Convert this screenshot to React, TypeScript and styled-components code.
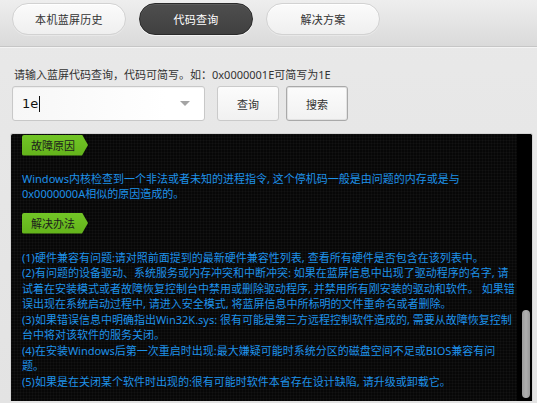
import { useLayoutEffect, useRef, useState } from 'react';
import styled, { createGlobalStyle } from 'styled-components';

const FONT = '"Noto Sans", "Noto Sans CJK SC", sans-serif';
const TEXT_BLUE = '#1e92ea';

const GlobalStyle = createGlobalStyle`
  html, body {
    margin: 0;
    padding: 0;
    height: 100%;
    overflow: hidden;
  }
  body {
    background: linear-gradient(#e9e9e9, #e3e3e3);
    font-family: ${FONT};
  }
  #root {
    height: 100%;
  }
`;

const Page = styled.div`
  display: flex;
  flex-direction: column;
  height: 100%;
`;

const TabBar = styled.div`
  display: flex;
  gap: 13px;
  height: 47px;
  padding: 3px 0 0 12px;
  box-sizing: border-box;
  background: linear-gradient(#eeeeee, #dadada);
  border-bottom: 1px solid #c6c6c6;
  box-shadow: 0 1px 0 #f4f4f4;
`;

const Tab = styled.div<{ $active?: boolean }>`
  width: 114px;
  height: 32px;
  box-sizing: border-box;
  border-radius: 16px;
  display: flex;
  align-items: center;
  justify-content: center;
  font-size: 11px;
  letter-spacing: 0.3px;
  color: ${(p) => (p.$active ? '#ffffff' : '#333333')};
  background: ${(p) =>
    p.$active ? 'linear-gradient(#4e4e4e, #404040)' : 'linear-gradient(#fbfbfb, #efefef)'};
  border: 1px solid ${(p) => (p.$active ? '#2a2a2a' : '#d2d2d2')};
  box-shadow: ${(p) =>
    p.$active ? 'inset 0 1px 0 #5c5c5c, 0 1px 0 #f2f2f2' : 'inset 0 1px 0 #ffffff, 0 1px 0 #e8e8e8'};
`;

const Body = styled.div`
  flex: 1;
  min-height: 0;
  display: flex;
  flex-direction: column;
  padding: 20px 4px 2px 10px;
`;

const Hint = styled.div`
  font-size: 11px;
  line-height: 15px;
  color: #333;
  padding-left: 4px;
`;

const SearchRow = styled.div`
  display: flex;
  gap: 7px;
  margin-top: 4px;
  padding-left: 2px;
`;

const Field = styled.div`
  width: 193px;
  height: 35px;
  box-sizing: border-box;
  display: flex;
  align-items: center;
  padding: 0 14px 0 9px;
  margin-right: 5px;
  border: 1px solid #c8c8c8;
  border-radius: 3px;
  background: linear-gradient(90deg, #f7f7f7, #ffffff 80%);
  box-shadow: inset 0 1px 1px rgba(0, 0, 0, 0.05);
`;

const FieldText = styled.span`
  font-family: "DejaVu Sans", sans-serif;
  font-size: 13px;
  color: #111;
`;

const Caret = styled.span`
  display: inline-block;
  width: 1px;
  height: 16px;
  margin-left: 1px;
  background: #111;
`;

const Spacer = styled.span`
  flex: 1;
`;

const Arrow = styled.span`
  width: 0;
  height: 0;
  border-left: 5px solid transparent;
  border-right: 5px solid transparent;
  border-top: 5px solid #a4a4a4;
`;

const Button = styled.button<{ $focused?: boolean }>`
  width: 62px;
  height: 35px;
  padding: 0;
  font-family: ${FONT};
  font-size: 11px;
  color: #333;
  border-radius: 3px;
  border: 1px solid ${(p) => (p.$focused ? '#a9a9a9' : '#cacaca')};
  background: linear-gradient(#fcfcfc, #f1f1f1);
  box-shadow: ${(p) => (p.$focused ? 'inset 0 0 0 1px #e2e2e2' : 'none')};
`;

const Panel = styled.div`
  flex: 1;
  min-height: 0;
  margin-top: 12px;
  display: flex;
  border-radius: 3px 3px 0 0;
  border: 1px solid #d4d4d4;
  border-bottom: none;
  background-color: #070707;
  background-image: linear-gradient(rgba(255, 255, 255, 0.025) 1px, transparent 1px),
    linear-gradient(90deg, rgba(255, 255, 255, 0.025) 1px, transparent 1px);
  background-size: 3px 3px;
  overflow: hidden;
`;

const Scroller = styled.div`
  flex: 1;
  overflow-y: scroll;
  scrollbar-width: none;
  padding: 0 2px 12px 11px;

  &::-webkit-scrollbar {
    display: none;
  }
`;

const Track = styled.div`
  width: 15px;
  box-sizing: border-box;
  padding: 3px 2px 3px 5px;
  background: #000;
  display: flex;
  flex-direction: column;
`;

const Thumb = styled.div`
  width: 8px;
  border-radius: 4px;
  background: linear-gradient(90deg, #9c9c9c, #b0b0b0 50%, #9a9a9a);
`;

const Tag = styled.div`
  width: 66px;
  height: 21px;
  box-sizing: border-box;
  padding-left: 9px;
  display: flex;
  align-items: center;
  font-size: 11px;
  color: #1c1c1c;
  background: linear-gradient(#72c526, #63b31b);
  border-radius: 2px;
  clip-path: polygon(0 0, calc(100% - 6px) 0, 100% 50%, calc(100% - 6px) 100%, 0 100%);
`;

const Section = styled.section<{ $gap?: number }>`
  display: flex;
  flex-direction: column;
  gap: ${(p) => p.$gap ?? 15}px;
  margin-top: 11px;

  &:first-child {
    margin-top: 8px;
  }
`;

const Text = styled.div`
  font-size: 11px;
  line-height: 15.5px;
  color: ${TEXT_BLUE};
  width: 494px;
`;

const sections = [
  { title: '蓝屏代码', lines: ['0x0000001E'] },
  { title: '错误名称', lines: ['KMODE_EXCEPTION_NOT_HANDLED'] },
  {
    title: '错误说明',
    lines: [
      '内核模式下的程序产生了一个异常, 而错误处理程序并没有捕获到该异常。',
      '蓝屏信息中通常会给出发生异常的地址以及相关的驱动程序文件名。',
      '该错误多与硬件、驱动程序或系统文件有关。',
    ],
  },
  {
    title: '可能原因',
    lines: [
      '(1)内存条损坏或者与主板不兼容。',
      '(2)安装了与当前系统不兼容的驱动程序或软件。',
      '(3)系统文件被病毒破坏或者被误删除。',
      '(4)BIOS设置不当或者需要升级。',
    ],
  },
  {
    title: '相关文件',
    lines: ['ntoskrnl.exe, win32k.sys, hal.dll', '以及蓝屏信息中所提示的第三方驱动程序文件。'],
  },
  {
    title: '参数说明',
    lines: [
      '参数1: 未处理的异常代码',
      '参数2: 发生异常的地址',
      '参数3: 异常的第一个参数',
      '参数4: 异常的第二个参数',
    ],
  },
  {
    title: '故障原因',
    lines: [
      'Windows内核检查到一个非法或者未知的进程指令, 这个停机码一般是由问题的内存或是与0x0000000A相似的原因造成的。',
    ],
  },
  {
    title: '解决办法',
    gap: 16,
    lines: [
      '(1)硬件兼容有问题:请对照前面提到的最新硬件兼容性列表, 查看所有硬件是否包含在该列表中。',
      '(2)有问题的设备驱动、系统服务或内存冲突和中断冲突: 如果在蓝屏信息中出现了驱动程序的名字, 请试着在安装模式或者故障恢复控制台中禁用或删除驱动程序, 并禁用所有刚安装的驱动和软件。 如果错误出现在系统启动过程中, 请进入安全模式, 将蓝屏信息中所标明的文件重命名或者删除。',
      '(3)如果错误信息中明确指出Win32K.sys: 很有可能是第三方远程控制软件造成的, 需要从故障恢复控制台中将对该软件的服务关闭。',
      '(4)在安装Windows后第一次重启时出现:最大嫌疑可能时系统分区的磁盘空间不足或BIOS兼容有问题。',
      '(5)如果是在关闭某个软件时出现的:很有可能时软件本省存在设计缺陷, 请升级或卸载它。',
    ],
  },
];

export default function App() {
  const scrollRef = useRef<HTMLDivElement>(null);
  const trackRef = useRef<HTMLDivElement>(null);
  const [thumb, setThumb] = useState({ top: 0, height: 0 });

  useLayoutEffect(() => {
    const el = scrollRef.current;
    const track = trackRef.current;
    if (!el || !track) return;
    const update = () => {
      const room = track.clientHeight - 6;
      const height = Math.max(20, (room * el.clientHeight) / el.scrollHeight);
      const max = el.scrollHeight - el.clientHeight;
      const top = max > 0 ? ((room - height) * el.scrollTop) / max : 0;
      setThumb({ top, height });
    };
    el.scrollTop = el.scrollHeight;
    update();
    el.addEventListener('scroll', update);
    return () => el.removeEventListener('scroll', update);
  }, []);

  return (
    <Page>
      <GlobalStyle />
      <TabBar>
        <Tab>本机蓝屏历史</Tab>
        <Tab $active>代码查询</Tab>
        <Tab>解决方案</Tab>
      </TabBar>
      <Body>
        <Hint>请输入蓝屏代码查询，代码可简写。如：0x0000001E可简写为1E</Hint>
        <SearchRow>
          <Field>
            <FieldText>1e</FieldText>
            <Caret />
            <Spacer />
            <Arrow />
          </Field>
          <Button>查询</Button>
          <Button $focused>搜索</Button>
        </SearchRow>
        <Panel>
          <Scroller ref={scrollRef}>
            {sections.map((s) => (
              <Section key={s.title} $gap={s.gap}>
                <Tag>{s.title}</Tag>
                <div>
                  {s.lines.map((line, i) => (
                    <Text key={i}>{line}</Text>
                  ))}
                </div>
              </Section>
            ))}
          </Scroller>
          <Track ref={trackRef}>
            <Thumb style={{ marginTop: thumb.top, height: thumb.height }} />
          </Track>
        </Panel>
      </Body>
    </Page>
  );
}
